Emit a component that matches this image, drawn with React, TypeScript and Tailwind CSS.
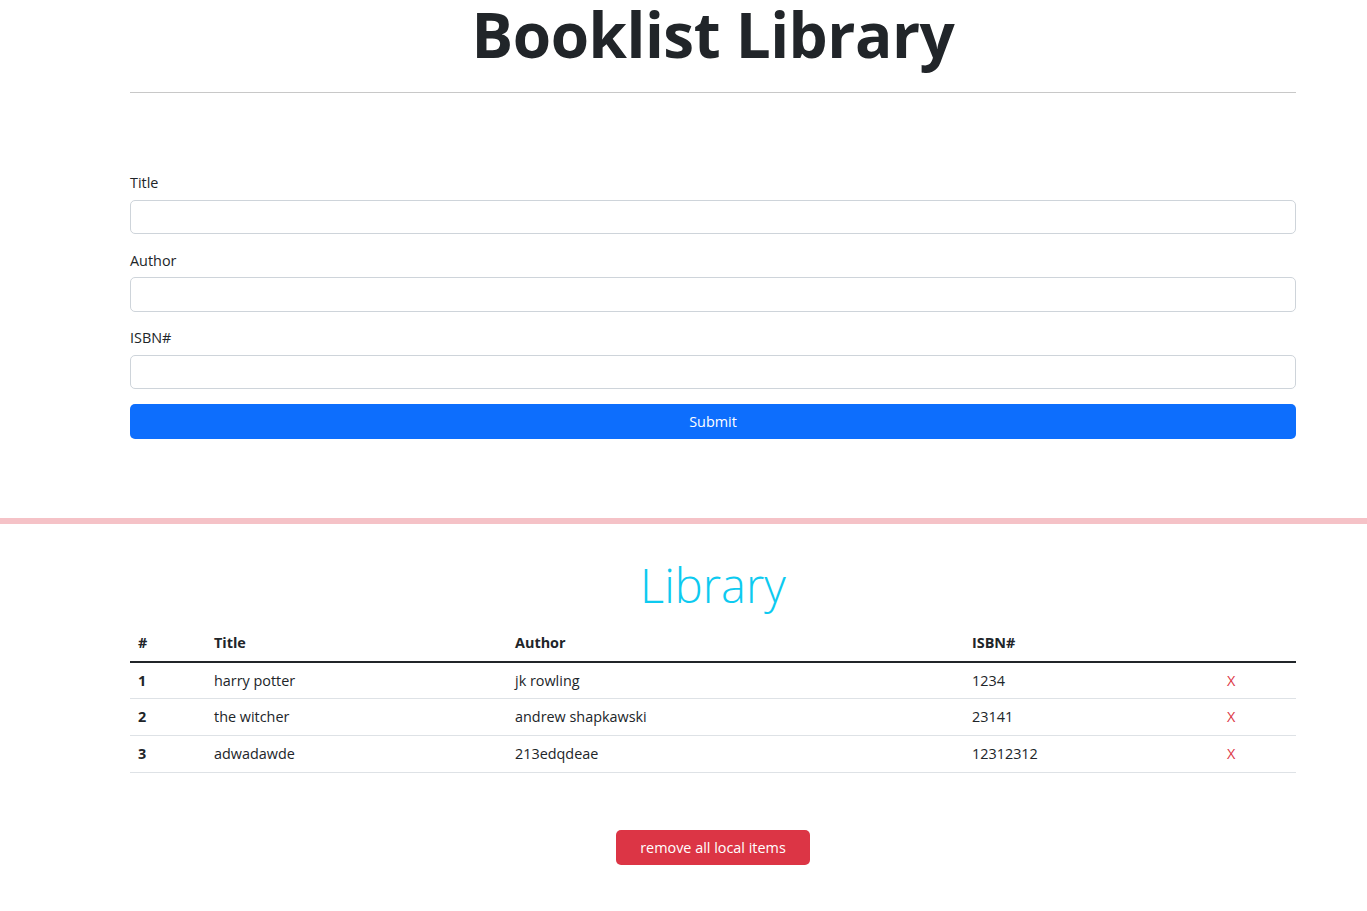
import React from "react";

const books = [
  { id: 1, title: "harry potter", author: "jk rowling", isbn: "1234" },
  { id: 2, title: "the witcher", author: "andrew shapkawski", isbn: "23141" },
  { id: 3, title: "adwadawde", author: "213edqdeae", isbn: "12312312" },
];

const Field = ({ label, gap }: { label: string; gap: string }) => (
  <div className={gap}>
    <label className="block leading-[21.6px] mb-[6px]">{label}</label>
    <input className="block w-full h-[34.5px] border border-[#ced4da] rounded-[5px] bg-white" />
  </div>
);

export default function App() {
  return (
    <div className="font-['Open_Sans',sans-serif] text-[#212529] text-[14.4px] bg-white min-h-[911px]">
      <div className="w-[1166px] ml-[130px]">
        <h1 className="text-center text-[62px] font-bold leading-[68px] tracking-[-0.5px]">Booklist Library</h1>
        <hr className="mt-[24px] border-0 border-t border-[#c8c8c8]" />
        <form className="mt-[79px]" onSubmit={(e) => e.preventDefault()}>
          <Field label="Title" gap="mb-[15.5px]" />
          <Field label="Author" gap="mb-[15.5px]" />
          <Field label="ISBN#" gap="mb-[15px]" />
          <button className="block w-full h-[34.5px] bg-[#0d6efd] text-white rounded-[5px] leading-[34px]">Submit</button>
        </form>
      </div>
      <div className="mt-[79px] h-[6px] bg-[#f5c2c7]" />
      <div className="w-[1166px] ml-[130px]">
        <h2 className="mt-[31px] text-center text-[47px] font-light leading-[60px] text-[#0dcaf0]">Library</h2>
        <table className="mt-[11px] w-full border-collapse text-left">
          <colgroup>
            <col className="w-[76px]" />
            <col className="w-[301px]" />
            <col className="w-[457px]" />
            <col className="w-[255px]" />
            <col className="w-[77px]" />
          </colgroup>
          <thead>
            <tr className="border-b-2 border-[#212529]">
              <th className="px-[8px] h-[36px] font-bold">#</th>
              <th className="px-[8px] font-bold">Title</th>
              <th className="px-[8px] font-bold">Author</th>
              <th className="px-[8px] font-bold">ISBN#</th>
              <th className="px-[8px]"></th>
            </tr>
          </thead>
          <tbody>
            {books.map((b) => (
              <tr key={b.id} className="border-b border-[#dee2e6]">
                <td className="px-[8px] h-[37px] font-bold">{b.id}</td>
                <td className="px-[8px]">{b.title}</td>
                <td className="px-[8px]">{b.author}</td>
                <td className="px-[8px]">{b.isbn}</td>
                <td className="px-[8px] text-[#dc3545]">X</td>
              </tr>
            ))}
          </tbody>
        </table>
        <div className="mt-[57px] flex justify-center">
          <button className="w-[194px] h-[35px] bg-[#dc3545] text-white rounded-[5px]">remove all local items</button>
        </div>
      </div>
    </div>
  );
}
